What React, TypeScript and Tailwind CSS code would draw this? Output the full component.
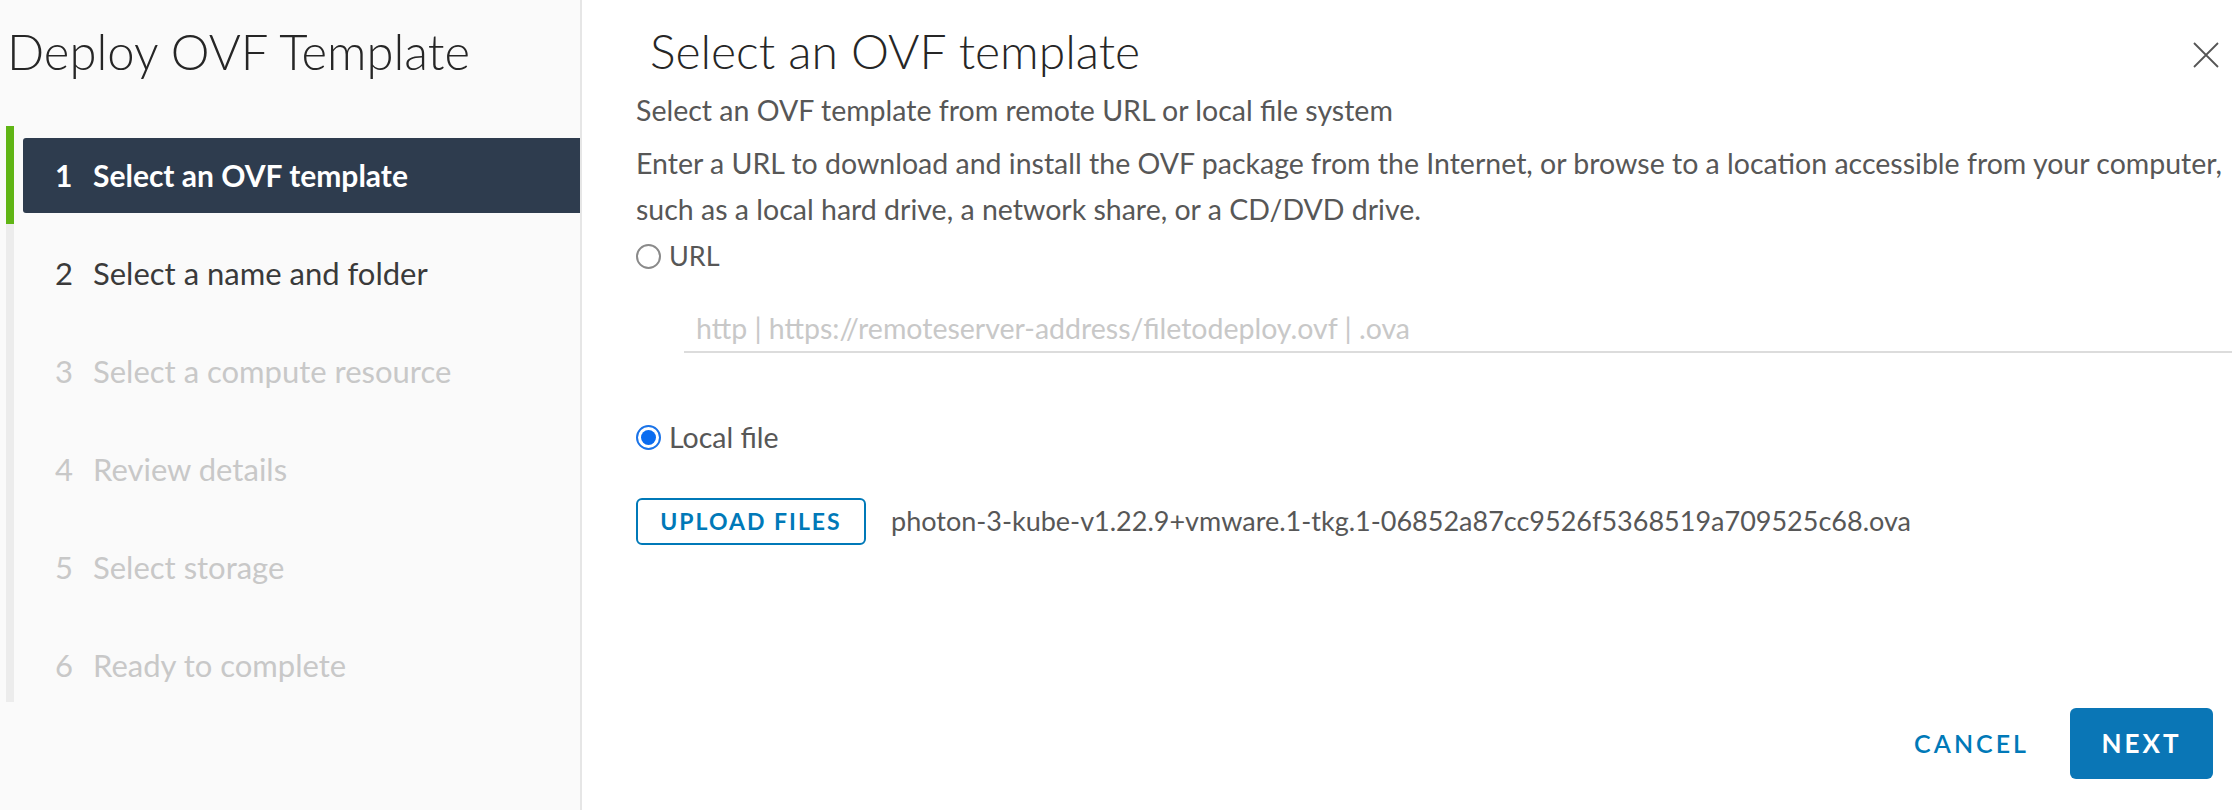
import React from "react";

const steps = [
  { n: 1, label: "Select an OVF template", state: "active" },
  { n: 2, label: "Select a name and folder", state: "enabled" },
  { n: 3, label: "Select a compute resource", state: "disabled" },
  { n: 4, label: "Review details", state: "disabled" },
  { n: 5, label: "Select storage", state: "disabled" },
  { n: 6, label: "Ready to complete", state: "disabled" },
];

const font = "font-['Lato','Liberation_Sans',sans-serif]";

function StepItem({ n, label, state, last }: { n: number; label: string; state: string; last: boolean }) {
  const active = state === "active";
  return (
    <div className="flex h-[98px] items-stretch">
      <div className={`w-[8px] ${last ? "h-[86px]" : "h-full"} ${active ? "bg-[#60b515]" : "bg-[#ececec]"}`} />
      <div className="flex-1 flex items-center pl-[9px]">
        {active ? (
          <div className="flex items-center w-full h-[75px] rounded-l-[3px] bg-[#2e3c4e] pl-[32px] text-white font-bold text-[30px]">
            <span className="w-[38px]">{n}</span>
            <span>{label}</span>
          </div>
        ) : (
          <div className={`flex items-center w-full pl-[32px] text-[31px] ${state === "enabled" ? "text-[#3a3a3a]" : "text-[#c8c8c8]"}`}>
            <span className="w-[38px]">{n}</span>
            <span>{label}</span>
          </div>
        )}
      </div>
    </div>
  );
}

function Radio({ checked }: { checked?: boolean }) {
  return checked ? (
    <span className="flex items-center justify-center w-[25px] h-[25px] rounded-full border-2 border-[#1a73e8] bg-white">
      <span className="w-[15px] h-[15px] rounded-full bg-[#0a6cf0]" />
    </span>
  ) : (
    <span className="w-[25px] h-[25px] rounded-full border-2 border-[#8a8a8a] bg-white" />
  );
}

export default function App() {
  return (
    <div className={`flex w-[2236px] h-[810px] bg-white ${font}`}>
      <aside className="w-[582px] shrink-0 h-full bg-[#fafafa] border-r-2 border-[#e6e6e6] flex flex-col">
        <h1 className="pl-[7px] pt-[18px] leading-[66px] text-[49px] font-light text-[#262626]">Deploy OVF Template</h1>
        <div className="mt-[42px] ml-[6px] flex flex-col">
          {steps.map((s, i) => (
            <StepItem key={s.n} n={s.n} label={s.label} state={s.state} last={i === steps.length - 1} />
          ))}
        </div>
      </aside>

      <main className="flex-1 h-full flex flex-col pl-[54px] pr-[4px] text-[#575757]">
        <div className="flex items-start justify-between pt-[18px] pr-[13px]">
          <h2 className="ml-[14px] leading-[66px] text-[48px] font-light text-[#262626]">Select an OVF template</h2>
          <button className="mt-[24px] w-[26px] h-[26px] flex items-center justify-center text-[#555]">
            <svg width="26" height="26" viewBox="0 0 26 26" fill="none" stroke="currentColor" strokeWidth="1.8">
              <path d="M1 1 L25 25 M25 1 L1 25" />
            </svg>
          </button>
        </div>

        <p className="mt-[2px] leading-[48px] text-[28.5px] whitespace-nowrap">Select an OVF template from remote URL or local file system</p>
        <p className="mt-[6px] leading-[46px] text-[28.5px] whitespace-nowrap">
          Enter a URL to download and install the OVF package from the Internet, or browse to a location accessible from your computer,
          <br />
          such as a local hard drive, a network share, or a CD/DVD drive.
        </p>

        <label className="flex items-center gap-[8px] h-[48px] text-[27px]">
          <Radio />
          <span>URL</span>
        </label>

        <div className="mt-[26px] ml-[48px] h-[47px] border-b-2 border-[#dcdcdc] flex items-center pl-[12px] text-[28.5px] text-[#c8c8c8]">
          http | https://remoteserver-address/filetodeploy.ovf | .ova
        </div>

        <label className="mt-[60px] flex items-center gap-[8px] h-[48px] text-[28.5px]">
          <Radio checked />
          <span>Local file</span>
        </label>

        <div className="mt-[37px] flex items-center">
          <button className="h-[47px] w-[230px] rounded-[6px] border-2 border-[#0079b8] text-[#0079b8] text-[23px] font-bold tracking-[2px]">
            UPLOAD FILES
          </button>
          <span className="ml-[25px] text-[27px]">photon-3-kube-v1.22.9+vmware.1-tkg.1-06852a87cc9526f5368519a709525c68.ova</span>
        </div>

        <div className="flex-1" />

        <div className="flex items-center justify-end gap-[41px] pb-[31px] pr-[19px]">
          <button className="text-[#0079b8] text-[25px] font-semibold tracking-[3px]">CANCEL</button>
          <button className="h-[71px] w-[143px] rounded-[6px] bg-[#0a76b6] text-white text-[26px] font-bold tracking-[3px]">NEXT</button>
        </div>
      </main>
    </div>
  );
}
